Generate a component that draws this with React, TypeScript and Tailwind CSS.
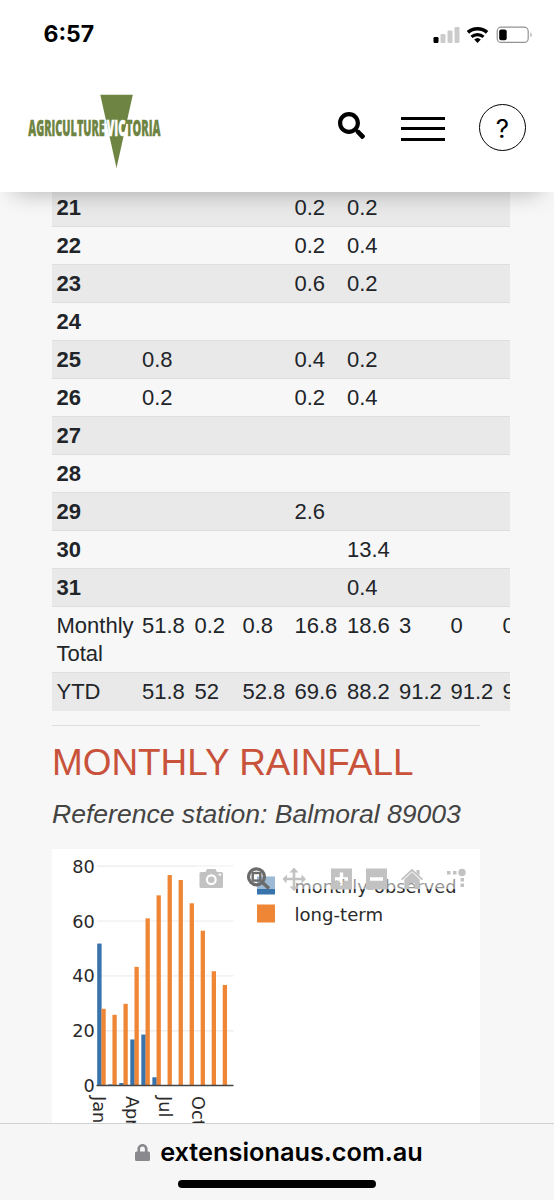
import { FaLock, FaSearch } from "react-icons/fa";

type Row = { label: string; values: string[]; height: string; bold?: boolean };

const columns = [85.5, 52.5, 48, 52, 52.5, 52, 51.5, 52, 52];

const day = (label: string, values: string[] = []): Row => ({
  label,
  values,
  height: "h-[38px]",
  bold: true,
});

const rows: Row[] = [
  day("21", ["", "", "", "0.2", "0.2"]),
  day("22", ["", "", "", "0.2", "0.4"]),
  day("23", ["", "", "", "0.6", "0.2"]),
  day("24"),
  day("25", ["0.8", "", "", "0.4", "0.2"]),
  day("26", ["0.2", "", "", "0.2", "0.4"]),
  day("27"),
  day("28"),
  day("29", ["", "", "", "2.6"]),
  day("30", ["", "", "", "", "13.4"]),
  day("31", ["", "", "", "", "0.4"]),
  {
    label: "Monthly Total",
    values: ["51.8", "0.2", "0.8", "16.8", "18.6", "3", "0", "0"],
    height: "h-[66px]",
  },
  {
    label: "YTD",
    values: ["51.8", "52", "52.8", "69.6", "88.2", "91.2", "91.2", "91.2"],
    height: "h-[38px]",
  },
];

const observed = [51.8, 0.4, 0.9, 16.8, 18.6, 3];
const longTerm = [28, 25.8, 29.8, 43.3, 61, 69.4, 76.8, 75, 66.5, 56.5, 41.7, 36.7];

function StatusBar() {
  return (
    <div className="flex h-[69px] items-center justify-between pl-[43.5px] pr-[21px]">
      <span className="font-['Inter'] text-[23px] font-bold leading-none">6:57</span>
      <svg width="101" height="20" viewBox="432.5 24 101 20">
        <rect x="434" y="36" width="5" height="6" rx="1.2" />
        <g fill="#cbcbcb">
          <rect x="441" y="33" width="5" height="9" rx="1.2" />
          <rect x="448" y="29.5" width="5" height="12.5" rx="1.2" />
          <rect x="455" y="26" width="5" height="16" rx="1.2" />
        </g>
        <g fill="none" stroke="#000" strokeWidth="3.6">
          <path d="M468.4 31.4a14.5 14.5 0 0 1 19.2 0" />
          <path d="M472 35.9a9 9 0 0 1 12 0" strokeWidth="3.2" />
        </g>
        <path d="M474.7 38.6a4.8 4.8 0 0 1 6.6 0L478 42z" />
        <rect x="497.7" y="26.2" width="31" height="15.2" rx="4" fill="none" stroke="#929292" strokeWidth="1.2" />
        <path d="M531 31.2q2.2 2.6 0 5.4z" fill="#929292" />
        <rect x="499.7" y="28.5" width="7.5" height="10.7" rx="2" />
      </svg>
    </div>
  );
}

function Logo() {
  return (
    <svg
      width="136"
      height="78"
      viewBox="26 92 136 78"
      className="overflow-visible font-['Open_Sans'] font-extrabold"
      fill="#6e8442"
      stroke="#6e8442"
      strokeWidth="0.4"
      fontSize="22"
    >
      <path d="M100.3 94.7h32.5L116.5 168z" stroke="none" />
      <text x="28.3" y="135.6" textLength="76.5" lengthAdjust="spacingAndGlyphs">
        AGRICULTURE
      </text>
      <text
        x="106.5"
        y="135.6"
        textLength="19"
        lengthAdjust="spacingAndGlyphs"
        fill="#fff"
        stroke="#fff"
      >
        VIC
      </text>
      <text x="126" y="135.6" textLength="34.5" lengthAdjust="spacingAndGlyphs">
        TORIA
      </text>
    </svg>
  );
}

function Header() {
  return (
    <header className="relative z-10 h-48 bg-white shadow-[0_14px_22px_-14px_rgba(0,0,0,0.3)]">
      <StatusBar />
      <div className="flex h-[123px] items-start pl-[26px] pr-7 pt-[23px]">
        <Logo />
        <FaSearch className="ml-auto mt-5 size-[27px]" />
        <div className="ml-9 mt-[24.5px] flex w-11 flex-col gap-[7.5px]">
          <div className="h-[3px] bg-black" />
          <div className="h-[3px] bg-black" />
          <div className="h-[3px] bg-black" />
        </div>
        <div className="ml-[34px] mt-3 flex size-[47px] items-center justify-center rounded-full border-[1.5px] border-black pt-0.5 font-['Inter'] text-[26px]">
          ?
        </div>
      </div>
    </header>
  );
}

function RainTable() {
  return (
    <div className="-mt-1 ml-[52px] w-[457.5px] overflow-hidden">
      <table className="w-[498px] table-fixed border-collapse text-[22px] leading-7 text-[#212529]">
        <colgroup>
          {columns.map((width, i) => (
            <col key={i} style={{ width }} />
          ))}
        </colgroup>
        <tbody>
          {rows.map((row) => (
            <tr
              key={row.label}
              className={`${row.height} border-t border-[#dcdee2] align-top odd:bg-[#e9e9e9]`}
            >
              <th
                className={`pl-[4.5px] pt-[5px] text-left ${row.bold ? "font-bold" : "font-normal"}`}
              >
                {row.label}
              </th>
              {columns.slice(1).map((_, i) => (
                <td key={i} className="pl-[4.5px] pt-[5px]">
                  {row.values[i]}
                </td>
              ))}
            </tr>
          ))}
        </tbody>
      </table>
    </div>
  );
}

function ModeBar() {
  return (
    <g fill="#c2c2c2">
      <rect x="195" y="866" width="277" height="23" fill="#fff" opacity="0.5" />
      <path
        fillRule="evenodd"
        d="M201 872h4.5l1.5-3h8.5l1.5 3h4.5q1.500 0 1.500 1.500v13q0 1.500-1.500 1.500H201q-1.500 0-1.500-1.500v-13q0-1.500 1.500-1.500zM211.3 874.3a5.4 5.4 0 1 0 .01 0zM218.6 873.8v1.8h2.6v-1.8z"
      />
      <circle cx="211.3" cy="879.7" r="3.3" />
      <g stroke="#6b6b6b" fill="none">
        <circle cx="256.5" cy="876.8" r="8" strokeWidth="3.2" />
        <rect x="252.7" y="873" width="7.6" height="7.6" strokeWidth="2.4" />
        <path d="m262.5 882.5 6.5 6" strokeWidth="3.4" />
      </g>
      <path d="M294 867.5l4.5 5h-3.2v5.200h6.200v-3.200l4.500 4.500-4.500 4.500v-3.200h-6.200v6.200h3.200l-4.500 4.500-4.500-4.500h3.200v-6.200h-6.200v3.200L282.500 879l4.500-4.500v3.200h5.700v-5.200h-3.200z" />
      <path fillRule="evenodd" d="M331 868.5h21v21h-21zM339.8 872.5v4.8H335v3.4h4.8v4.8h3.4v-4.8h4.8v-3.4h-4.8v-4.8z" />
      <path fillRule="evenodd" d="M366 868.5h21v21h-21zM370 877.3v3.4h13v-3.4z" />
      <path d="M412 872.3l7.7 7.2v9.5h-5v-6h-5.4v6h-5v-9.5z" />
      <path d="M401.5 879.6L412 870l10.5 9.6" fill="none" stroke="#c2c2c2" strokeWidth="1.9" />
      <path d="M416.5 870h3v5.6l-3-2.6z" />
      <circle cx="462" cy="872.5" r="3.7" />
      <path d="M447 871h3.5v3.5H447zM453 871h3.5v3.5H453zM460.5 878h3.5v3.5h-3.5zM460.5 883.5h3.5v3.5h-3.5z" />
    </g>
  );
}

function RainChart() {
  const base = 1085.5;
  const unit = 2.74;
  return (
    <svg
      width="428"
      height="280"
      viewBox="52 849 428 280"
      className="ml-[52px] block bg-white font-['DejaVu_Sans']"
      fontSize="17.7"
      fill="#2a2a2a"
    >
      {[0, 20, 40, 60, 80].map((tick) => (
        <g key={tick}>
          {tick > 0 && (
            <path d={`M97 ${base - tick * unit}h136.5`} stroke="#f0eeee" strokeWidth="1.4" />
          )}
          <text x="94.8" y={base - tick * unit + 6.4} textAnchor="end">
            {tick}
          </text>
        </g>
      ))}
      {observed.map((mm, i) => (
        <rect
          key={i}
          x={97.2 + i * 11.03}
          y={base - mm * unit}
          width="4.4"
          height={mm * unit}
          fill="#3973ac"
        />
      ))}
      {longTerm.map((mm, i) => (
        <rect
          key={i}
          x={101.4 + i * 11.03}
          y={base - mm * unit}
          width="4.3"
          height={mm * unit}
          fill="#ef8636"
        />
      ))}
      <path d="M96.5 1085.5h137" stroke="#444" strokeWidth="1.4" />
      {["Jan", "Apr", "Jul", "Oct"].map((month, i) => (
        <text key={month} transform={`translate(${92.7 + i * 33.1} 1096) rotate(90)`}>
          {month}
        </text>
      ))}
      <rect x="257" y="876.5" width="18" height="18" fill="#3973ac" />
      <rect x="257" y="904.5" width="18" height="18" fill="#ef8636" />
      <text x="294.5" y="893" fontSize="17" textLength="162" lengthAdjust="spacingAndGlyphs">
        monthly-observed
      </text>
      <text x="294.5" y="920.8" fontSize="17" textLength="88.5" lengthAdjust="spacingAndGlyphs">
        long-term
      </text>
      <ModeBar />
    </svg>
  );
}

function AddressBar() {
  return (
    <footer className="flex h-[77px] flex-col items-center border-t border-[#cfd2d2] bg-[#f7f6f6] pt-[14px]">
      <div className="flex items-center gap-[10px] pl-1">
        <FaLock className="h-[21px] w-[15px] text-[#8a898d]" />
        <span className="whitespace-nowrap font-['Inter'] text-[25.3px] font-semibold leading-7">
          extensionaus.com.au
        </span>
      </div>
      <div className="mt-[14px] h-2 w-[198px] rounded-full bg-black" />
    </footer>
  );
}

export default function App() {
  return (
    <div className="flex h-[1200px] w-[554px] flex-col overflow-hidden bg-[#f7f7f7] font-['Liberation_Sans',sans-serif] text-black">
      <Header />
      <main className="h-[931px] shrink-0 overflow-hidden">
        <RainTable />
        <hr className="ml-[52px] mt-[14px] w-[428px] border-t-[1.5px] border-[#dcdee0]" />
        <h2 className="ml-[52px] mt-4 whitespace-nowrap text-[36.9px] leading-[42px] text-[#c8523a]">
          MONTHLY RAINFALL
        </h2>
        <p className="mb-[18px] ml-[52px] mt-[14px] whitespace-nowrap text-[26.55px] italic leading-[33px] text-[#444]">
          Reference station: Balmoral 89003
        </p>
        <RainChart />
      </main>
      <AddressBar />
    </div>
  );
}
